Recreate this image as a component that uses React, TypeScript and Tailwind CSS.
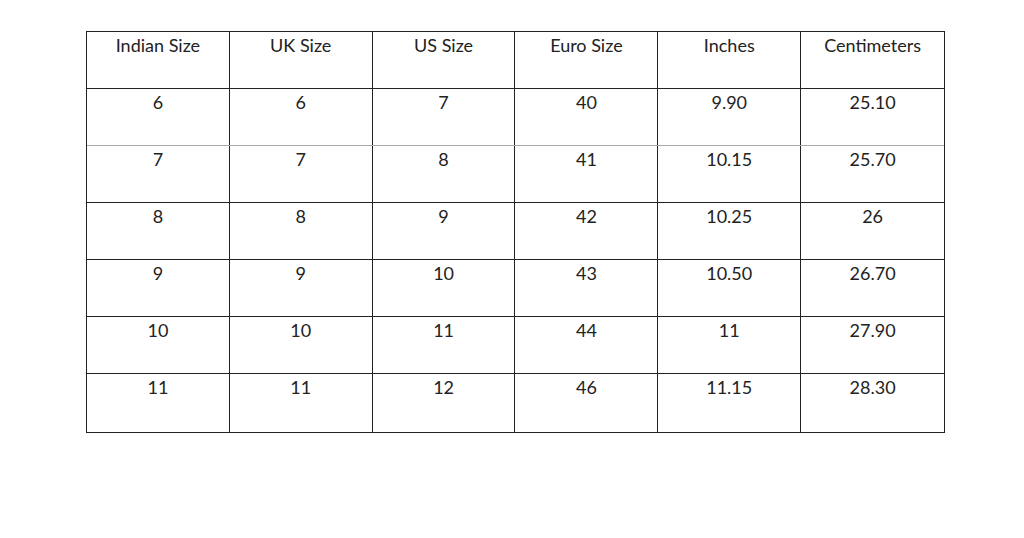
const headers = ['Indian Size', 'UK Size', 'US Size', 'Euro Size', 'Inches', 'Centimeters'];

const rows = [
  ['6', '6', '7', '40', '9.90', '25.10'],
  ['7', '7', '8', '41', '10.15', '25.70'],
  ['8', '8', '9', '42', '10.25', '26'],
  ['9', '9', '10', '43', '10.50', '26.70'],
  ['10', '10', '11', '44', '11', '27.90'],
  ['11', '11', '12', '46', '11.15', '28.30'],
];

export default function App() {
  return (
    <div className="w-[1024px] h-[538px] bg-white pt-[31px] pl-[86px] font-['Lato','Liberation_Sans',sans-serif] text-[18px] leading-[24px] text-[#222]">
      <div className="w-[859px] border-[1.5px] border-[#222]">
        <div className="grid grid-cols-6 h-[57px] border-b-[1.5px] border-[#222]">
          {headers.map((h, i) => (
            <div
              key={h}
              className={`pt-[1px] text-center ${i < 5 ? 'border-r-[1.5px] border-[#222]' : ''}`}
            >
              {h}
            </div>
          ))}
        </div>
        {rows.map((r, ri) => (
          <div
            key={ri}
            className={`grid grid-cols-6 h-[57px] ${
              ri === 0 ? 'border-b border-[#aaa]' : ri < 5 ? 'border-b-[1.5px] border-[#222]' : 'h-[58px]'
            }`}
          >
            {r.map((c, ci) => (
              <div
                key={ci}
                className={`pt-[1px] text-center ${ci < 5 ? 'border-r-[1.5px] border-[#222]' : ''}`}
              >
                {c}
              </div>
            ))}
          </div>
        ))}
      </div>
    </div>
  );
}
